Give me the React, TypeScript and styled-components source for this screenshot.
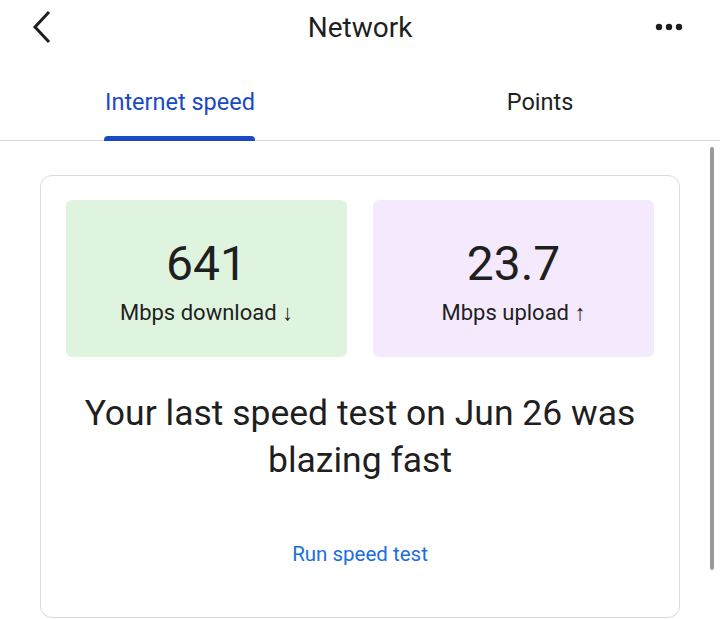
import React from "react";
import styled, { createGlobalStyle } from "styled-components";

const Global = createGlobalStyle`
  html, body { margin: 0; padding: 0; background: #fff; }
  body { font-family: Roboto, "Noto Sans", "Liberation Sans", sans-serif; color: #1f1f1f; overflow: hidden; }
`;

const Page = styled.div`
  width: 720px;
  height: 619px;
  position: relative;
  overflow: hidden;
  background: #fff;
`;

const TopBar = styled.header`
  height: 54px;
  display: grid;
  grid-template-columns: 90px 1fr 90px;
  align-items: center;
`;

const IconButton = styled.button<{ $pad: string }>`
  border: none;
  background: none;
  padding: ${(p) => p.$pad};
  display: flex;
  align-items: center;
  height: 54px;
`;

const Title = styled.h1`
  margin: 0;
  text-align: center;
  font-size: 28px;
  font-weight: 400;
  color: #1f1f1f;
`;

const Tabs = styled.nav`
  display: grid;
  grid-template-columns: 1fr 1fr;
  border-bottom: 1px solid #dcdcdc;
  height: 86px;
`;

const Tab = styled.div<{ $active?: boolean }>`
  position: relative;
  display: flex;
  justify-content: center;
  padding-top: 34px;
  font-size: 23.5px;
  color: ${(p) => (p.$active ? "#1a49c4" : "#1f1f1f")};
`;

const Indicator = styled.span`
  position: absolute;
  bottom: -1px;
  left: 104px;
  width: 151px;
  height: 5px;
  background: #1a49c4;
  border-radius: 4px 4px 0 0;
`;

const Content = styled.main`
  padding: 34px 40px 0 40px;
`;

const Card = styled.section`
  border: 1px solid #dadada;
  border-radius: 12px;
  height: 443px;
  padding: 24px 25px 0 25px;
  box-sizing: border-box;
`;

const Stats = styled.div`
  display: grid;
  grid-template-columns: 1fr 1fr;
  gap: 26px;
`;

const StatBox = styled.div<{ $bg: string }>`
  background: ${(p) => p.$bg};
  border-radius: 6px;
  height: 157px;
  display: flex;
  flex-direction: column;
  align-items: center;
  padding-top: 36px;
  box-sizing: border-box;
`;

const StatValue = styled.div`
  font-size: 48px;
  line-height: 56px;
  color: #1f1f1f;
`;

const StatLabel = styled.div`
  font-size: 22px;
  margin-top: 8px;
  color: #1f1f1f;
`;

const Message = styled.p`
  margin: 33px 0 0 0;
  text-align: center;
  font-size: 35.5px;
  line-height: 47px;
  color: #1f1f1f;
`;

const Action = styled.div`
  margin-top: 58px;
  text-align: center;
  font-size: 20.5px;
  color: #1a6ee0;
`;

const Scrollbar = styled.div`
  position: absolute;
  right: 6px;
  top: 147px;
  width: 4px;
  height: 423px;
  background: #9a9a9a;
  border-radius: 2px;
`;

export default function App() {
  return (
    <Page>
      <Global />
      <TopBar>
        <IconButton $pad="0 0 0 30px" aria-label="Back">
          <svg width="22" height="34" viewBox="0 0 22 34">
            <path d="M19 2 L5 17 L19 32" fill="none" stroke="#1f1f1f" strokeWidth="3" />
          </svg>
        </IconButton>
        <Title>Network</Title>
        <IconButton $pad="0 0 0 25px" aria-label="More">
          <svg width="30" height="10" viewBox="0 0 30 10">
            <circle cx="4" cy="5" r="3.2" fill="#1f1f1f" />
            <circle cx="14" cy="5" r="3.2" fill="#1f1f1f" />
            <circle cx="24" cy="5" r="3.2" fill="#1f1f1f" />
          </svg>
        </IconButton>
      </TopBar>
      <Tabs>
        <Tab $active>
          Internet speed
          <Indicator />
        </Tab>
        <Tab>Points</Tab>
      </Tabs>
      <Content>
        <Card>
          <Stats>
            <StatBox $bg="#dff4df">
              <StatValue>641</StatValue>
              <StatLabel>Mbps download ↓</StatLabel>
            </StatBox>
            <StatBox $bg="#f5eafd">
              <StatValue>23.7</StatValue>
              <StatLabel>Mbps upload ↑</StatLabel>
            </StatBox>
          </Stats>
          <Message>
            Your last speed test on Jun 26 was
            <br />
            blazing fast
          </Message>
          <Action>Run speed test</Action>
        </Card>
      </Content>
      <Scrollbar />
    </Page>
  );
}
